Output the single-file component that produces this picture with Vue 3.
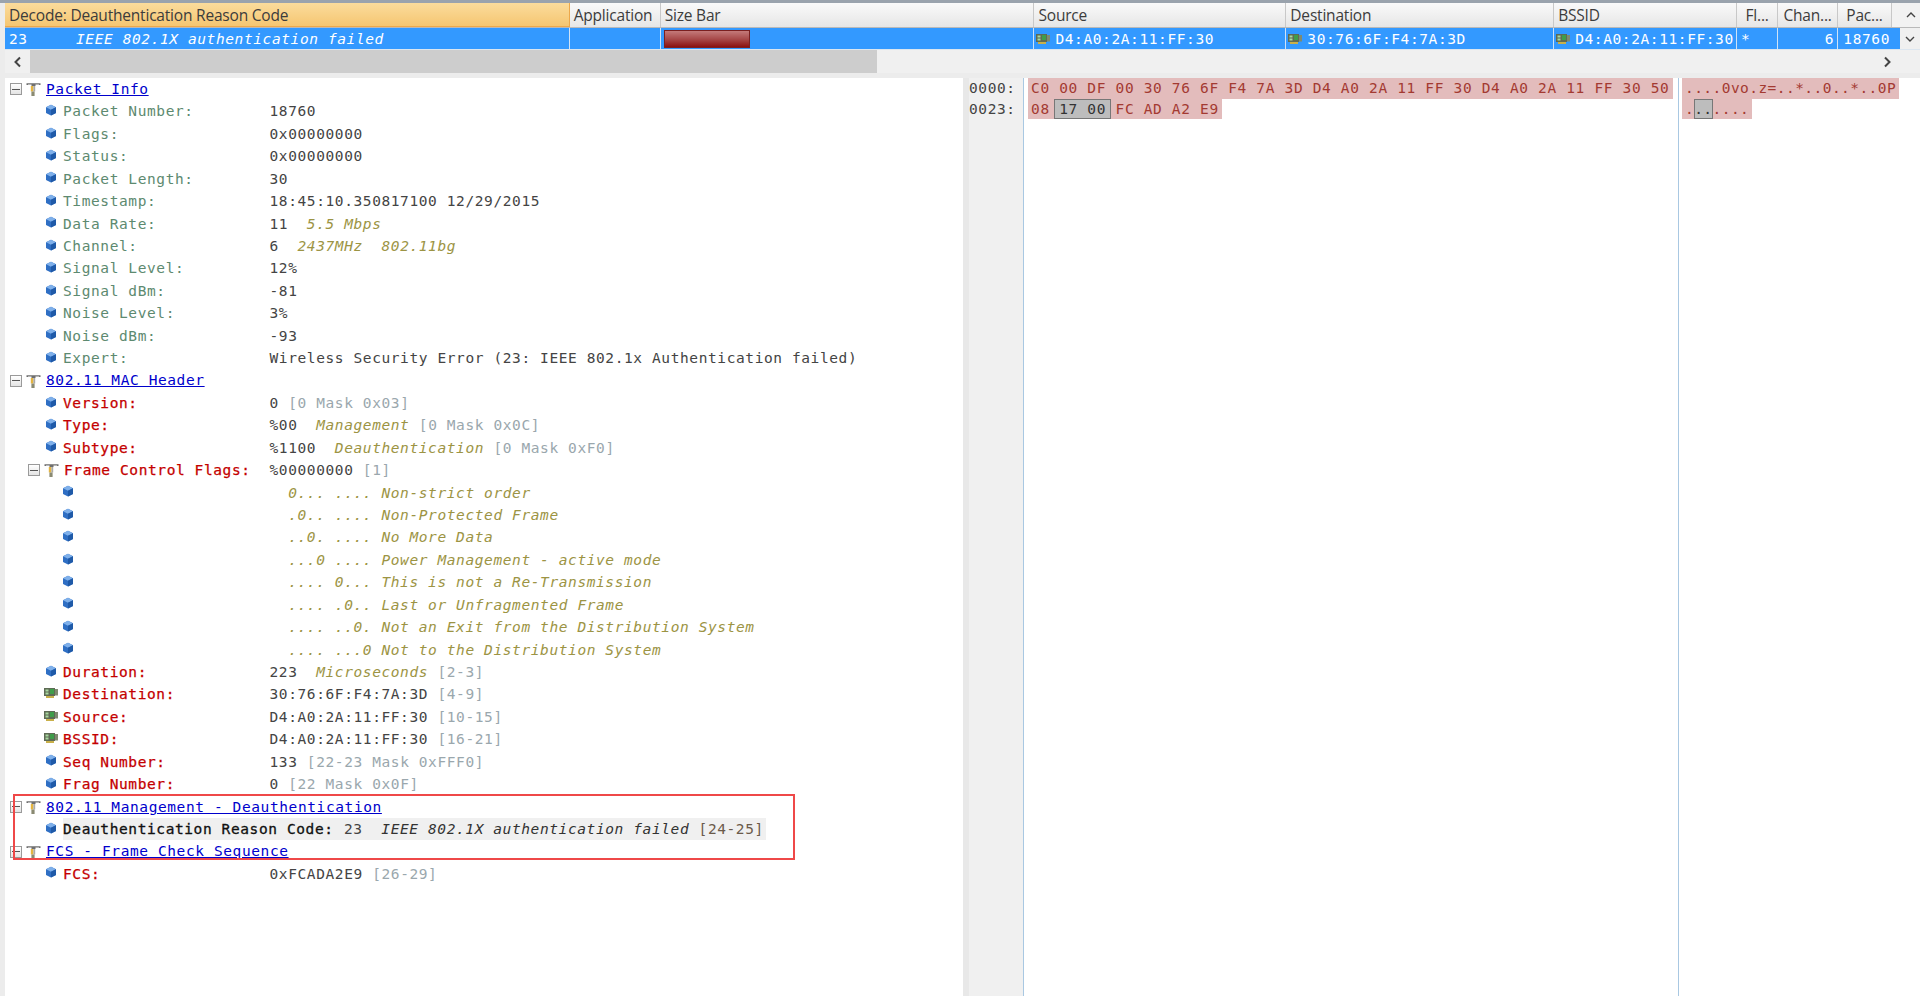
<script setup>
const cols = [
  { t: 'Decode: Deauthentication Reason Code', c: 'decode' },
  { t: 'Application', c: 'app' },
  { t: 'Size Bar', c: 'size' },
  { t: 'Source', c: 'src' },
  { t: 'Destination', c: 'dst' },
  { t: 'BSSID', c: 'bss' },
  { t: 'Fl...', c: 'fl' },
  { t: 'Chan...', c: 'chan' },
  { t: 'Pac...', c: 'pac' }
]
const v = (t) => ({ t, c: 'val' })
const d = (t) => ({ t, c: 'desc' })
const b = (t) => ({ t, c: 'br' })
const info = (label, ...parts) => ({ k: 'leaf', cl: 'green', icon: 'cube', label, parts })
const mac = (label, ...parts) => ({ k: 'leaf', cl: 'red', icon: 'cube', label, parts })
const nic = (label, ...parts) => ({ k: 'leaf', cl: 'red', icon: 'nic', label, parts })
const flag = (t, s) => ({ k: 'flag', icon: 'cube', label: '', parts: [d(`  ${t} ${s}`)] })
const sec = (label) => ({ k: 'sec', label, parts: [] })
const rows = [
  sec('Packet Info'),
  info('Packet Number:', v('18760')),
  info('Flags:', v('0x00000000')),
  info('Status:', v('0x00000000')),
  info('Packet Length:', v('30')),
  info('Timestamp:', v('18:45:10.350817100 12/29/2015')),
  info('Data Rate:', v('11  '), d('5.5 Mbps')),
  info('Channel:', v('6  '), d('2437MHz  802.11bg')),
  info('Signal Level:', v('12%')),
  info('Signal dBm:', v('-81')),
  info('Noise Level:', v('3%')),
  info('Noise dBm:', v('-93')),
  info('Expert:', v('Wireless Security Error (23: IEEE 802.1x Authentication failed)')),
  sec('802.11 MAC Header'),
  mac('Version:', v('0 '), b('[0 Mask 0x03]')),
  mac('Type:', v('%00  '), d('Management '), b('[0 Mask 0x0C]')),
  mac('Subtype:', v('%1100  '), d('Deauthentication '), b('[0 Mask 0xF0]')),
  { k: 'sub', label: 'Frame Control Flags:', parts: [v('%00000000 '), b('[1]')] },
  flag('0... ....', 'Non-strict order'),
  flag('.0.. ....', 'Non-Protected Frame'),
  flag('..0. ....', 'No More Data'),
  flag('...0 ....', 'Power Management - active mode'),
  flag('.... 0...', 'This is not a Re-Transmission'),
  flag('.... .0..', 'Last or Unfragmented Frame'),
  flag('.... ..0.', 'Not an Exit from the Distribution System'),
  flag('.... ...0', 'Not to the Distribution System'),
  mac('Duration:', v('223  '), d('Microseconds '), b('[2-3]')),
  nic('Destination:', v('30:76:6F:F4:7A:3D '), b('[4-9]')),
  nic('Source:', v('D4:A0:2A:11:FF:30 '), b('[10-15]')),
  nic('BSSID:', v('D4:A0:2A:11:FF:30 '), b('[16-21]')),
  mac('Seq Number:', v('133 '), b('[22-23 Mask 0xFFF0]')),
  mac('Frag Number:', v('0 '), b('[22 Mask 0x0F]')),
  sec('802.11 Management - Deauthentication'),
  { k: 'reason', icon: 'cube', label: 'Deauthentication Reason Code:', parts: [{ t: '23  ', c: 'rv' }, { t: 'IEEE 802.1X authentication failed ', c: 'rd' }, { t: '[24-25]', c: 'rb' }] },
  sec('FCS - Frame Check Sequence'),
  mac('FCS:', v('0xFCADA2E9 '), b('[26-29]'))
]
</script>

<template>
  <div class="screen">
    <svg width="0" height="0" class="defs">
      <defs>
        <symbol id="cube" viewBox="0 0 12 12">
          <path d="M6 .8 11 3.3v5.6L6 11.4 1 8.9V3.3z" fill="#2f6fc4" />
          <path d="M6 .8 11 3.3 6 5.8 1 3.3z" fill="#7fb0ea" />
          <path d="M6 5.8 11 3.3v5.6L6 11.4z" fill="#1f5aa8" />
        </symbol>
        <symbol id="tool" viewBox="0 0 15 14">
          <path d="M.5 3V1.200h14V3h-1.500V2.600H9.500v1.400H5.500V2.600H2V3z" fill="#6f6f6f" />
          <path d="M4.800 4h2.600v5.500H4.800z" fill="#e3b440" />
          <path d="M7.400 4h1.800v5.500H7.400z" fill="#a9a9a9" />
          <path d="M5.400 9.500h3.200V14H5.400z" fill="#8a8a72" />
        </symbol>
        <symbol id="nic" viewBox="0 0 15 12">
          <path d="M0 1h11v8H0z" fill="#5e6b55" />
          <path d="M1.500 2.500h3v2h-3zM1.500 5.500h3v2h-3z" fill="#a8d8a0" />
          <path d="M6 2h4v5H6z" fill="#3f9d4a" />
          <path d="M11 2h3v6.500h-3z" fill="#7f8a70" />
          <path d="M2 9h8v2H2z" fill="#c9b04a" />
        </symbol>
      </defs>
    </svg>

    <div class="topstrip"></div>

    <div class="head">
      <div v-for="col in cols" :key="col.c" class="hcell" :class="col.c">{{ col.t }}</div>
      <div class="vbtn headbtn">
        <svg width="10" height="6" viewBox="0 0 10 6"><path d="M1 5 5 1l4 4" fill="none" stroke="#444" stroke-width="1.400" /></svg>
      </div>
    </div>

    <div class="selrow">
      <div class="rcell decode"><span class="code">23</span><i>IEEE 802.1X authentication failed</i></div>
      <div class="rcell app"></div>
      <div class="rcell size"><span class="bar"></span></div>
      <div class="rcell src"><svg class="nicico" width="15" height="12"><use href="#nic" /></svg>D4:A0:2A:11:FF:30</div>
      <div class="rcell dst"><svg class="nicico" width="15" height="12"><use href="#nic" /></svg>30:76:6F:F4:7A:3D</div>
      <div class="rcell bss"><svg class="nicico" width="15" height="12"><use href="#nic" /></svg>D4:A0:2A:11:FF:30</div>
      <div class="rcell fl">*</div>
      <div class="rcell chan num">6</div>
      <div class="rcell pacrow num">18760</div>
      <div class="vbtn sel">
        <svg width="10" height="6" viewBox="0 0 10 6"><path d="M1 1l4 4 4-4" fill="none" stroke="#444" stroke-width="1.400" /></svg>
      </div>
    </div>

    <div class="hscroll">
      <div class="arrow">
        <svg width="9" height="12" viewBox="0 0 9 12"><path d="M7 1.500 2.500 6 7 10.500" fill="none" stroke="#444" stroke-width="2" /></svg>
      </div>
      <div class="thumb"></div>
      <div class="track"></div>
      <div class="arrow">
        <svg width="9" height="12" viewBox="0 0 9 12"><path d="M2 1.500 6.500 6 2 10.500" fill="none" stroke="#444" stroke-width="2" /></svg>
      </div>
    </div>

    <div class="panes">
      <div class="tree">
        <div class="redbox"></div>
        <div v-for="(r, i) in rows" :key="i" class="row" :class="r.k">
          <div class="rowhead">
            <span v-if="r.k === 'sec' || r.k === 'sub'" class="exp"><span class="minus"></span></span>
            <svg v-if="r.k === 'sec' || r.k === 'sub'" class="tool" width="15" height="14"><use href="#tool" /></svg>
            <svg v-if="r.icon === 'cube'" class="ico" width="12" height="12"><use href="#cube" /></svg>
            <svg v-if="r.icon === 'nic'" class="ico nicleft" width="15" height="12"><use href="#nic" /></svg>
            <span class="label" :class="r.cl">{{ r.label }}</span>
          </div>
          <div class="value"><span v-for="(p, j) in r.parts" :key="j" :class="p.c">{{ p.t }}</span></div>
        </div>
      </div>

      <div class="addr">
        <div>0000:</div>
        <div>0023:</div>
      </div>

      <div class="hex">
        <div><span class="hl">C0 00 DF 00 30 76 6F F4 7A 3D D4 A0 2A 11 FF 30 D4 A0 2A 11 FF 30 50</span></div>
        <div><span class="hl">08 <span class="sel-b hexsel">17 00</span> FC AD A2 E9</span></div>
      </div>

      <div class="ascii">
        <div><span class="hl">....0vo.z=..*..0..*..0P</span></div>
        <div><span class="hl">.<span class="sel-b">..</span>....</span></div>
      </div>
    </div>
  </div>
</template>

<style>
html, body { margin: 0; background: #fff; overflow: hidden; }
</style>

<style scoped>
.screen {
  width: 1920px;
  height: 996px;
  overflow: hidden;
  display: flex;
  flex-direction: column;
  padding-left: 5px;
  box-sizing: border-box;
  background: #ececec;
  font-family: "DejaVu Sans Mono", monospace;
  font-size: 14.5px;
  letter-spacing: 0.6px;
}
.defs { position: absolute; }
.topstrip { height: 3px; margin-left: -5px; background: #9aa3ad; flex: none; }

.head, .selrow { display: flex; flex: none; }
.head {
  height: 24px;
  background: linear-gradient(#fafafa, #e6e6e6);
  border-bottom: 1px solid #b9b9b9;
  font-family: "Open Sans", sans-serif;
  font-size: 15.5px;
  letter-spacing: -0.2px;
  color: #3c3c3c;
}
.hcell {
  box-sizing: border-box;
  padding-left: 4px;
  line-height: 25px;
  border-right: 1px solid #c8c8c8;
  white-space: nowrap;
  overflow: hidden;
}
.hcell.decode {
  background: linear-gradient(#fbdc9c, #f5c672);
  border-bottom: 1px solid #eda84a;
  border-right: 1px solid #eda84a;
  height: 24px;
}
.decode { width: 565px; }
.app { width: 91px; }
.size { width: 374px; }
.src { width: 252px; }
.dst { width: 268px; }
.bss { width: 183px; }
.fl { width: 41px; }
.chan { width: 60px; }
.pac { width: 54px; }
.pacrow { width: 62px; }
.hcell.fl, .hcell.chan, .hcell.pac { text-align: center; padding-left: 0; }
.vbtn {
  width: 20px;
  display: flex;
  align-items: center;
  justify-content: center;
  background: #f0f0f0;
}
.headbtn { width: 28px; padding-left: 10px; box-sizing: border-box; background: #f2f2f2; }

.selrow {
  height: 21px;
  background: #3399ff;
  color: #fff;
  line-height: 20px;
  white-space: pre;
  border-bottom: 1px solid #dce6f0;
}
.rcell {
  box-sizing: border-box;
  padding-left: 4px;
  border-right: 1px solid #cfe3f7;
  overflow: hidden;
  display: flex;
  align-items: center;
}
.code { width: 67px; flex: none; }
.rcell.num { justify-content: flex-end; padding-right: 3px; }
.rcell.pacrow { padding-right: 10px; border-right: 0; }
.rcell.src, .rcell.dst, .rcell.bss { padding-left: 2px; }
.nicico { flex: none; margin-right: 4px; }
.bar {
  display: block;
  width: 86px;
  height: 18px;
  margin-left: -1px;
  border: 1px solid #7a2020;
  box-sizing: border-box;
  background: linear-gradient(#c47a7a, #a84a4a 50%, #8a1010);
}

.hscroll {
  height: 23px;
  flex: none;
  display: flex;
  background: #f0f0f0;
  padding-right: 20px;
}
.arrow {
  width: 25px;
  display: flex;
  align-items: center;
  justify-content: center;
  flex: none;
}
.thumb { width: 847px; background: #cdcdcd; flex: none; }
.track { flex: 1; }

.panes {
  flex: 1;
  display: flex;
  margin-top: 5px;
  min-height: 0;
  background: #fff;
  color: #444;
  white-space: pre;
}
.tree {
  position: relative;
  width: 958px;
  flex: none;
  background: #fff;
  border-right: 6px solid #e8e8e8;
  box-sizing: content-box;
}
.redbox {
  position: absolute;
  left: 8px;
  top: 716px;
  width: 782px;
  height: 66px;
  box-sizing: border-box;
  border: 2px solid #ef4848;
  pointer-events: none;
}
.row { display: flex; height: 22.43px; line-height: 22.43px; }
.rowhead {
  display: flex;
  align-items: center;
  min-width: 264.5px;
  box-sizing: border-box;
  flex: none;
}
.leaf .rowhead { padding-left: 40px; }
.flag .rowhead { padding-left: 57px; }
.reason .rowhead { padding-left: 40px; min-width: 339px; }
.sec .rowhead { padding-left: 5px; }
.sub .rowhead { padding-left: 23px; }
.exp {
  width: 12px;
  height: 12px;
  box-sizing: border-box;
  border: 1px solid #9a9a9a;
  background: linear-gradient(#fff, #e4e4e4);
  display: flex;
  align-items: center;
  justify-content: center;
  flex: none;
}
.minus { width: 8px; height: 1px; background: #555; }
.tool { margin-left: 4px; margin-right: 5px; flex: none; }
.ico { flex: none; margin-right: 6px; margin-top: -3px; }
.nicleft { margin-left: -1px; margin-right: 4px; }
.label.green { color: #5d8a70; }
.label.red, .sub .label { color: #c40000; -webkit-text-stroke: 0.25px #c40000; }
.sec .label { color: #0000cc; text-decoration: underline; }
.reason .label { color: #111; background: #f0f0f0; padding-right: 6px; -webkit-text-stroke: 0.3px #111; }
.val { color: #444; }
.desc { color: #9c9444; font-style: italic; }
.br { color: #9aa7ad; }
.reason .value { background: #f0f0f0; margin-left: -11px; padding-left: 11px; padding-right: 2px; }
.rv { color: #444; }
.rd { color: #333; font-style: italic; }
.rb { color: #6b5a4a; }

.addr {
  width: 54px;
  flex: none;
  background: #f0f0f0;
  border-right: 1px solid #a9c8e2;
  line-height: 20.5px;
  color: #444;
}
.hex {
  width: 655px;
  flex: none;
  padding-left: 4px;
  box-sizing: border-box;
  border-right: 1px solid #a9c8e2;
  line-height: 20.5px;
  letter-spacing: 0.66px;
}
.ascii {
  flex: 1;
  padding-left: 3px;
  line-height: 20.5px;
  letter-spacing: 0.45px;
}
.hex > div, .ascii > div { height: 20.5px; }
.hl {
  display: inline-block;
  background: #e3bcbc;
  color: #a33a32;
  padding: 0 3px;
  height: 20.5px;
  vertical-align: top;
}
.sel-b {
  display: inline-block;
  box-sizing: border-box;
  background: #bdbdbd;
  color: #333;
  outline: 1px solid #777;
  outline-offset: -1px;
  height: 20.5px;
  line-height: 20.5px;
  vertical-align: top;
}
.hexsel { padding: 0 5px; margin: 0 -5px; }
</style>
